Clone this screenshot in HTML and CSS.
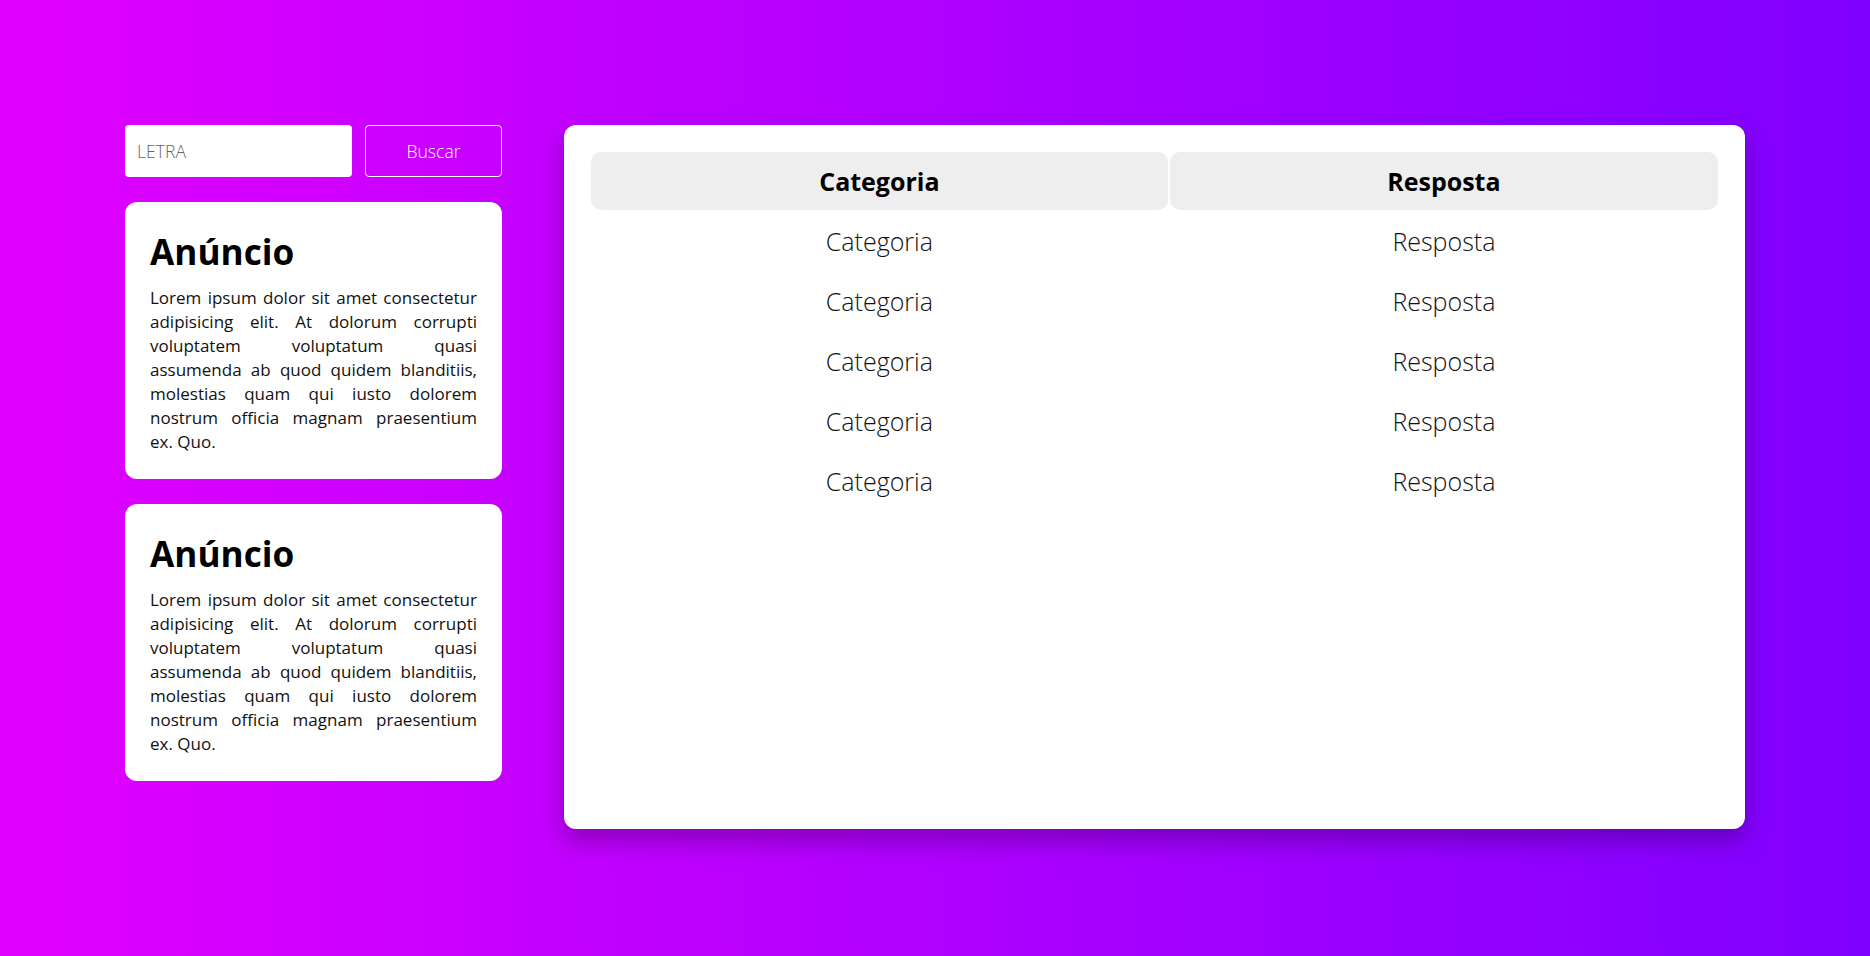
FILE: index.html
```html
<!DOCTYPE html>
<html lang="pt-BR">
<head>
<meta charset="utf-8">
<title>Busca</title>
<link rel="stylesheet" href="styles.css">
</head>
<body>
<main class="page">
  <aside class="sidebar">
    <form class="search">
      <input class="search-input" type="text" placeholder="LETRA">
      <button class="search-btn" type="button">Buscar</button>
    </form>
    <section class="ad">
      <h2 class="ad-title">Anúncio</h2>
      <p class="ad-text">Lorem ipsum dolor sit amet consectetur adipisicing elit. At dolorum corrupti voluptatem voluptatum quasi assumenda ab quod quidem blanditiis, molestias quam qui iusto dolorem nostrum officia magnam praesentium ex. Quo.</p>
    </section>
    <section class="ad">
      <h2 class="ad-title">Anúncio</h2>
      <p class="ad-text">Lorem ipsum dolor sit amet consectetur adipisicing elit. At dolorum corrupti voluptatem voluptatum quasi assumenda ab quod quidem blanditiis, molestias quam qui iusto dolorem nostrum officia magnam praesentium ex. Quo.</p>
    </section>
  </aside>
  <section class="panel">
    <table class="results">
      <thead>
        <tr><th>Categoria</th><th>Resposta</th></tr>
      </thead>
      <tbody>
        <tr><td>Categoria</td><td>Resposta</td></tr>
        <tr><td>Categoria</td><td>Resposta</td></tr>
        <tr><td>Categoria</td><td>Resposta</td></tr>
        <tr><td>Categoria</td><td>Resposta</td></tr>
        <tr><td>Categoria</td><td>Resposta</td></tr>
      </tbody>
    </table>
  </section>
</main>
</body>
</html>
```
FILE: styles.css
```css
* { box-sizing: border-box; }

html, body {
  margin: 0;
  padding: 0;
}

body {
  min-height: 956px;
  height: 100vh;
  font-family: "Open Sans", "Noto Sans", sans-serif;
  background: linear-gradient(to right, #e100ff, #7f00ff);
  overflow: hidden;
}

.page {
  width: 1620px;
  margin: 0 auto;
  padding-top: 125px;
  display: flex;
  gap: 62px;
  align-items: flex-start;
}

.sidebar {
  width: 377px;
  flex: none;
  display: flex;
  flex-direction: column;
  gap: 25px;
}

.search {
  display: flex;
  gap: 13px;
  margin: 0;
}

.search-input {
  width: 227px;
  height: 52px;
  border: none;
  border-radius: 4px;
  background: #fff;
  padding: 0 12px;
  font-family: inherit;
  font-weight: 300;
  font-size: 17.6px;
  color: #333;
  outline: none;
}

.search-input::placeholder {
  color: #666;
}

.search-btn {
  flex: 1;
  height: 52px;
  border: 1px solid #fff;
  border-radius: 4px;
  background: transparent;
  color: #fff;
  font-family: inherit;
  font-weight: 300;
  font-size: 17.6px;
  cursor: pointer;
}

.ad {
  background: #fff;
  border-radius: 12px;
  padding: 25px;
  height: 277px;
}

.ad-title {
  margin: 0 0 11px;
  font-size: 35.2px;
  font-weight: 700;
  line-height: normal;
  color: #000;
}

.ad-text {
  margin: 0;
  font-size: 17px;
  line-height: 24px;
  text-align: justify;
  color: #111;
}

.panel {
  width: 1181px;
  height: 704px;
  flex: none;
  background: #fff;
  border-radius: 12px;
  padding: 25px;
  box-shadow: 0 12px 24px rgba(40, 0, 60, 0.35);
}

.results {
  width: 100%;
  border-spacing: 2px;
  font-size: 25px;
  color: #111;
}

.results th {
  background: #eeeeee;
  border-radius: 10px;
  font-weight: 700;
  color: #000;
  height: 58px;
  padding: 0 10px;
}

.results td {
  font-weight: 300;
  text-align: center;
  height: 58px;
  padding: 0 10px;
}
```
